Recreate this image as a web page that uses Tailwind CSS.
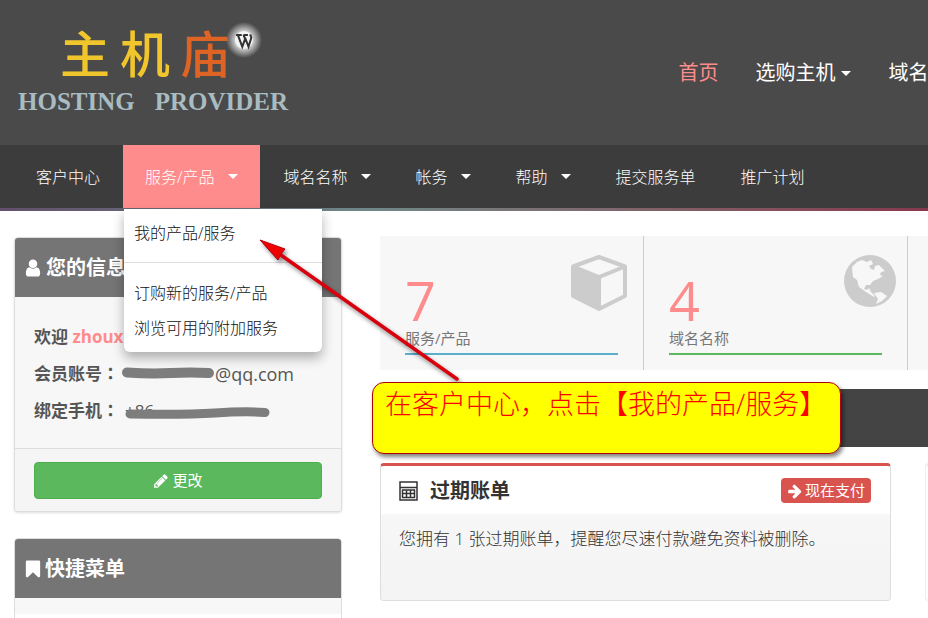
<!DOCTYPE html>
<html lang="zh-CN">
<head>
    <meta charset="UTF-8">
    <meta name="viewport" content="width=device-width, initial-scale=1.0">
    <title>客户中心 - 主机庙</title>
    <script src="https://cdn.jsdelivr.net/npm/@tailwindcss/browser@4"></script>
</head>
<body class="relative min-h-screen overflow-x-hidden bg-white font-['Open_Sans','Noto_Sans_CJK_SC',sans-serif] text-[#555]">

    <!-- Header -->
    <header class="flex h-[145px] overflow-hidden bg-[#4a4a4a]">
        <a href="#" class="w-[73%] shrink-0 pt-[22px] pl-[18px]">
            <span class="flex items-start pl-[42px] text-[50px] leading-[58px] font-medium">
                <span class="flex gap-[10px] font-['Noto_Sans_CJK_SC',sans-serif]">
                    <span class="text-[#f0c62c]">主</span>
                    <span class="text-[#f0c62c]">机</span>
                    <span class="text-[#dd6424]">庙</span>
                </span>
                <svg class="-ml-1 size-9" viewBox="0 0 32 32">
                    <defs>
                        <radialGradient id="halo">
                            <stop offset="0.4" stop-color="#e4e4e4"/>
                            <stop offset="1" stop-color="#e4e4e4" stop-opacity="0"/>
                        </radialGradient>
                    </defs>
                    <circle cx="16" cy="16" r="16" fill="url(#halo)"/>
                    <circle cx="16" cy="16" r="8" fill="#f4f4f4"/>
                    <path d="M9 11.500h5M10.500 11.500l4 10.500 2.500-7-1.500-3.500M15.500 11.500h4M17 14l3 8 2.500-8-1-3" fill="none" stroke="#333" stroke-width="1.800"/>
                </svg>
            </span>
            <span class="mt-1.5 flex gap-5 font-['Liberation_Serif',serif] text-[25px] leading-8 font-bold text-[#a9bcc1]">
                <span>HOSTING</span>
                <span>PROVIDER</span>
            </span>
        </a>
        <nav class="flex shrink-0 items-center gap-[37px] pt-px pl-px text-xl leading-8 whitespace-nowrap text-white">
            <a href="#" class="text-[#ff8c8c]">首页</a>
            <a href="#" class="flex items-center gap-[6px]">选购主机
                <svg class="h-[5px] w-[10px]" viewBox="0 0 10 5"><path d="M0 0h10L5 5z" fill="currentColor"/></svg>
            </a>
            <a href="#">域名</a>
        </nav>
    </header>

    <!-- Main menu -->
    <nav class="bg-[#3c3c3c]">
        <ul class="flex h-[63px] gap-px pl-[14px] text-base font-light whitespace-nowrap text-white">
            <li><a href="#" class="flex h-full items-center px-[22px]">客户中心</a></li>
            <li class="relative">
                <a href="#" class="flex h-full items-center gap-[14px] bg-[#ff8c8c] px-[22px]">服务/产品
                    <svg class="h-[5px] w-[10px]" viewBox="0 0 10 5"><path d="M0 0h10L5 5z" fill="currentColor"/></svg>
                </a>
                <ul class="absolute top-full left-px z-10 mt-px w-[198px] rounded-b-md bg-white pt-[7px] pb-[6px] leading-[35px] text-[#111] shadow-[0_6px_12px_rgba(0,0,0,0.3)]">
                    <li><a href="#" class="block px-[10px]">我的产品/服务</a></li>
                    <li class="mt-[11px] mb-[13px] h-px bg-[#ddd]"></li>
                    <li><a href="#" class="block px-[10px]">订购新的服务/产品</a></li>
                    <li><a href="#" class="block px-[10px]">浏览可用的附加服务</a></li>
                </ul>
            </li>
            <li><a href="#" class="flex h-full items-center gap-[13px] px-[22px]">域名名称
                <svg class="h-[5px] w-[10px]" viewBox="0 0 10 5"><path d="M0 0h10L5 5z" fill="currentColor"/></svg>
            </a></li>
            <li><a href="#" class="flex h-full items-center gap-[13px] px-[22px]">帐务
                <svg class="h-[5px] w-[10px]" viewBox="0 0 10 5"><path d="M0 0h10L5 5z" fill="currentColor"/></svg>
            </a></li>
            <li><a href="#" class="flex h-full items-center gap-[13px] px-[22px]">帮助
                <svg class="h-[5px] w-[10px]" viewBox="0 0 10 5"><path d="M0 0h10L5 5z" fill="currentColor"/></svg>
            </a></li>
            <li><a href="#" class="flex h-full items-center px-[22px]">提交服务单</a></li>
            <li><a href="#" class="flex h-full items-center px-[22px]">推广计划</a></li>
        </ul>
        <div class="h-[3px] bg-linear-to-r from-[#62506c] via-[#6f8888] via-40% to-[#86384c]"></div>
    </nav>

    <div class="flex items-start gap-[38px] overflow-hidden pt-[25px] pl-[14px]">
        <!-- Sidebar -->
        <aside class="mt-px flex w-[328px] shrink-0 flex-col gap-[26px]">
            <section class="overflow-hidden rounded border border-[#ddd] bg-[#f7f7f7] shadow-sm">
                <h2 class="-mx-px -mt-px flex h-[60px] items-center gap-[3px] bg-[#757575] pt-[2px] pl-[9px] text-xl font-bold text-white">
                    <svg class="size-5" viewBox="0 0 1792 1792" fill="currentColor"><path d="M1536 1399q0 109-62.500 187t-150.500 78h-854q-88 0-150.500-78t-62.500-187q0-85 8.500-160.500t31.500-152 58.500-131 94-89 134.500-34.500q131 128 313 128t313-128q76 0 134.500 34.500t94 89 58.500 131 31.500 152 8.500 160.500zm-256-887q0 159-112.500 271.500t-271.500 112.500-271.500-112.500-112.500-271.500 112.500-271.500 271.500-112.500 271.500 112.500 112.500 271.500z"/></svg>
                    您的信息
                </h2>
                <div class="px-[19px] pt-[21px] pb-[19px] text-[17px] leading-[37px]">
                    <p class="font-bold">欢迎 <span class="text-[#ff8c8c]">zhoux</span></p>
                    <p class="flex h-[37px] items-center"><strong>会员账号<span lang="zh-TW" class="font-['Noto_Sans_CJK_TC',sans-serif] leading-none">：</span></strong>
                        <svg class="ml-[2px] h-4 w-[94px]" viewBox="0 0 94 16"><path d="M6 6.500Q30 8 50 7T88 7" fill="none" stroke="#7d7d7d" stroke-width="10" stroke-linecap="round"/></svg>
                        <span class="text-lg">@qq.com</span>
                    </p>
                    <p class="flex h-[37px] items-center"><strong>绑定手机<span lang="zh-TW" class="font-['Noto_Sans_CJK_TC',sans-serif] leading-none">：</span></strong>
                        <span class="relative ml-[6px]">+86
                            <svg class="absolute top-[11px] left-0 h-4 w-[146px]" viewBox="0 0 146 16"><path d="M5 11Q60 12 90 10T140 9.500" fill="none" stroke="#7d7d7d" stroke-width="9" stroke-linecap="round"/></svg>
                        </span>
                    </p>
                </div>
                <div class="border-t border-[#ddd] bg-[#f5f5f5] px-[19px] pt-[13px] pb-3">
                    <button type="button" class="flex h-[37px] w-full items-center justify-center gap-[3px] rounded border border-[#4cae4c] bg-[#5cb85c] text-[15px] text-white">
                        <svg class="size-4" viewBox="0 0 1792 1792" fill="currentColor"><path d="M491 1536l91-91-235-235-91 91v107h128v128h107zm523-928q0-22-22-22-10 0-17 7l-542 542q-7 7-7 17 0 22 22 22 10 0 17-7l542-542q7-7 7-17zm-54-192l416 416-832 832h-416v-416zm683 96q0 53-37 90l-166 166-416-416 166-165q36-38 90-38 53 0 91 38l235 234q37 39 37 91z"/></svg>
                        更改
                    </button>
                </div>
            </section>
            <section class="overflow-hidden rounded border border-[#ddd] bg-white">
                <h2 class="-mx-px -mt-px flex h-[60px] items-center gap-[2px] bg-[#757575] pt-[2px] pl-[9px] text-xl font-bold text-white">
                    <svg class="size-5" viewBox="0 0 1792 1792" fill="currentColor"><path d="M1420 128q23 0 44 9 33 13 52.500 41t19.500 62v1289q0 34-19.500 62t-52.500 41q-19 8-44 8-48 0-83-32l-441-424-441 424q-36 33-83 33-23 0-44-9-33-13-52.500-41t-19.500-62v-1289q0-34 19.500-62t52.500-41q21-9 44-9h1048z"/></svg>
                    快捷菜单
                </h2>
                <div class="h-4 bg-[#f7f7f7]"></div>
                <div class="h-5"></div>
            </section>
        </aside>

        <!-- Content -->
        <main class="w-[1056px] shrink-0">
            <div class="grid grid-cols-4 bg-[#f7f7f7]">
                <div class="border-r border-[#ccc] pt-[19px] pb-[15px] pl-[25px]">
                    <div class="flex justify-between pr-4">
                        <span class="mt-[18px] text-[54px] leading-[54px] text-[#ff8c8c]">7</span>
                        <svg class="size-14" viewBox="0 0 56 56">
                            <path d="M28 2L54 11.500V41L28 54 2 41V11.500z" fill="#f7f7f7" stroke="#ccc" stroke-width="4" stroke-linejoin="round"/>
                            <path d="M2 11.500L28 22V54L2 41z" fill="#ccc"/>
                            <path d="M2 11.500L28 22 54 11.500M28 22V54" fill="none" stroke="#ccc" stroke-width="4"/>
                        </svg>
                    </div>
                    <p class="text-[15px] leading-[22px] text-[#777]">服务/产品</p>
                    <div class="mt-1 mr-[25px] h-[2px] bg-[#5bafcb]"></div>
                </div>
                <div class="border-r border-[#ccc] pt-[19px] pb-[15px] pl-[25px]">
                    <div class="flex justify-between pr-[11px]">
                        <span class="mt-[18px] text-[54px] leading-[54px] text-[#ff8c8c]">4</span>
                        <svg class="size-[52px]" viewBox="0 0 52 52">
                            <circle cx="26" cy="26" r="26" fill="#ccc"/>
                            <path d="M8 12l5-5 5-2 5 2 4-2 2 4-4 2 2 3 3 1 1-4 4-1 6 6-4 1-1 3 3 1-5 3-5 2-3 4-4 0-2 4 3 1 2-2 2 4 4 4-1 1-8-5-7-5-2-7-4-3z" fill="#f7f7f7"/>
                            <path d="M30 38l7-1 6 4-5 5-6 3 2-5z" fill="#f7f7f7"/>
                        </svg>
                    </div>
                    <p class="text-[15px] leading-[22px] text-[#777]">域名名称</p>
                    <div class="mt-1 mr-[25px] h-[2px] bg-[#5cb85c]"></div>
                </div>
                <div class="border-r border-[#ccc]"></div>
                <div></div>
            </div>

            <div class="mt-[19px] h-[58px] bg-[#444]"></div>

            <div class="mt-4 grid grid-cols-2 gap-[34px]">
                <section class="overflow-hidden rounded border border-t-3 border-[#ddd] border-t-[#d9534f]">
                    <div class="flex h-12 items-center pt-px pr-[19px] pl-[18px]">
                        <svg class="h-5 w-[19px] text-[#333]" viewBox="0 0 19 20" fill="none" stroke="currentColor">
                            <path d="M1 1h17v18H1z" stroke-width="1.500"/>
                            <path d="M1 6.500h17" stroke-width="1.500"/>
                            <path d="M3 9h13M3 12.500h13M3 16.500h13M3.500 8.500v8.500M7.500 8.500v8.500M11.500 8.500v8.500M15.500 8.500v8.500" stroke-width="1.500"/>
                        </svg>
                        <h3 class="ml-3 text-xl font-bold text-[#333]">过期账单</h3>
                        <a href="#" class="ml-auto flex h-[25px] items-center gap-[2px] rounded bg-[#d9534f] px-[6px] text-[15px] text-white">
                            <svg class="size-4" viewBox="0 0 1792 1792" fill="currentColor"><path d="M1600 960q0 54-37 91l-651 651q-39 37-91 37-51 0-90-37l-75-75q-38-38-38-91t38-91l293-293h-704q-52 0-84.500-37.500t-32.500-90.500v-128q0-53 32.500-90.500t84.500-37.500h704l-293-294q-38-36-38-90t38-90l75-75q38-38 90-38 53 0 91 38l651 651q37 35 37 90z"/></svg>
                            现在支付
                        </a>
                    </div>
                    <div class="bg-linear-to-b from-[#f7f7f7] to-[#f3f3f3] px-[18px] pt-3 pb-12">
                        <p class="text-[17px] leading-[26px] font-light text-[#333]">您拥有 1 张过期账单，提醒您尽速付款避免资料被删除。</p>
                    </div>
                </section>
                <section class="rounded border border-t-3 border-[#eee]"></section>
            </div>
        </main>
    </div>

    <!-- Annotation -->
    <svg class="absolute top-[230px] left-[250px] z-20 h-[155px] w-[215px] drop-shadow-[2px_3px_2px_rgba(0,0,0,0.45)]" viewBox="0 0 215 155">
        <path d="M28 23L207 149" stroke="#d8000c" stroke-width="3.500" stroke-linecap="round"/>
        <path d="M10 10L35 19 31 24 28 30z" fill="#f00000" stroke="#b00010" stroke-width="1"/>
    </svg>
    <div class="absolute top-[382px] left-[372px] z-20 h-[72px] rounded-xl border border-[#b00010] bg-[#ffff00] pr-[14px] pl-3 text-[27px] leading-[42px] font-light whitespace-nowrap text-[#f00] shadow-[2px_3px_4px_rgba(0,0,0,0.5)]">在客户中心，点击【我的产品/服务】</div>
</body>
</html>
